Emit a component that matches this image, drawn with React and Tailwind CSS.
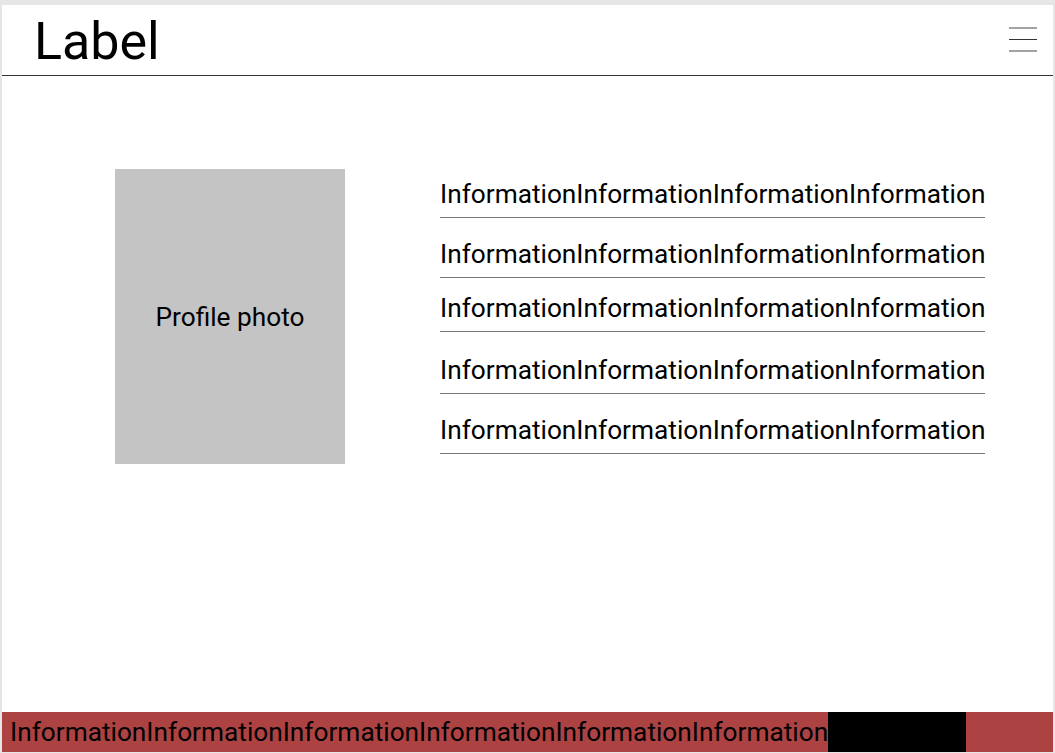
import React from "react";

const rows = [
  "mt-0",
  "mt-[21px]",
  "mt-[15px]",
  "mt-[23px]",
  "mt-[21px]",
];

export default function App() {
  const text = "InformationInformationInformationInformation";
  return (
    <div
      className="h-[753px] w-[1055px] bg-[#e6e6e6] pt-[5px] px-[2px] pb-[1px] flex flex-col text-black"
      style={{ fontFamily: "Roboto, 'Liberation Sans', sans-serif" }}
    >
      <div className="flex-1 bg-white flex flex-col">
        <header className="h-[71px] border-b border-[#333333] flex justify-between pl-[32px] pr-[16px]">
          <div className="pt-[11px] text-[52px] leading-[52px]">Label</div>
          <div className="pt-[22px] w-[28px] flex flex-col">
            <div className="h-[2px] bg-[#a3a3a3]"></div>
            <div className="h-px bg-[#333333] mt-[10px]"></div>
            <div className="h-[2px] bg-[#a3a3a3] mt-[10px]"></div>
          </div>
        </header>
        <main className="flex-1 flex pt-[93px] pl-[113px]">
          <div className="w-[230px] h-[295px] bg-[#c4c4c4] flex items-center justify-center text-[26.25px] leading-[30px]">
            Profile photo
          </div>
          <div className="ml-[95px] w-[545px] mt-[10px] flex flex-col">
            {rows.map((m, i) => (
              <div
                key={i}
                className={`${m} pb-2 border-b border-[#777777] text-[26.25px] leading-[30px] whitespace-nowrap`}
              >
                {text}
              </div>
            ))}
          </div>
        </main>
        <footer className="h-[40px] bg-[#ad4243] flex items-stretch pl-[8px]">
          <div className="text-[26.25px] leading-[40px] whitespace-nowrap">
            InformationInformationInformationInformationInformationInformation
          </div>
          <div className="w-[138px] bg-black"></div>
        </footer>
      </div>
    </div>
  );
}
